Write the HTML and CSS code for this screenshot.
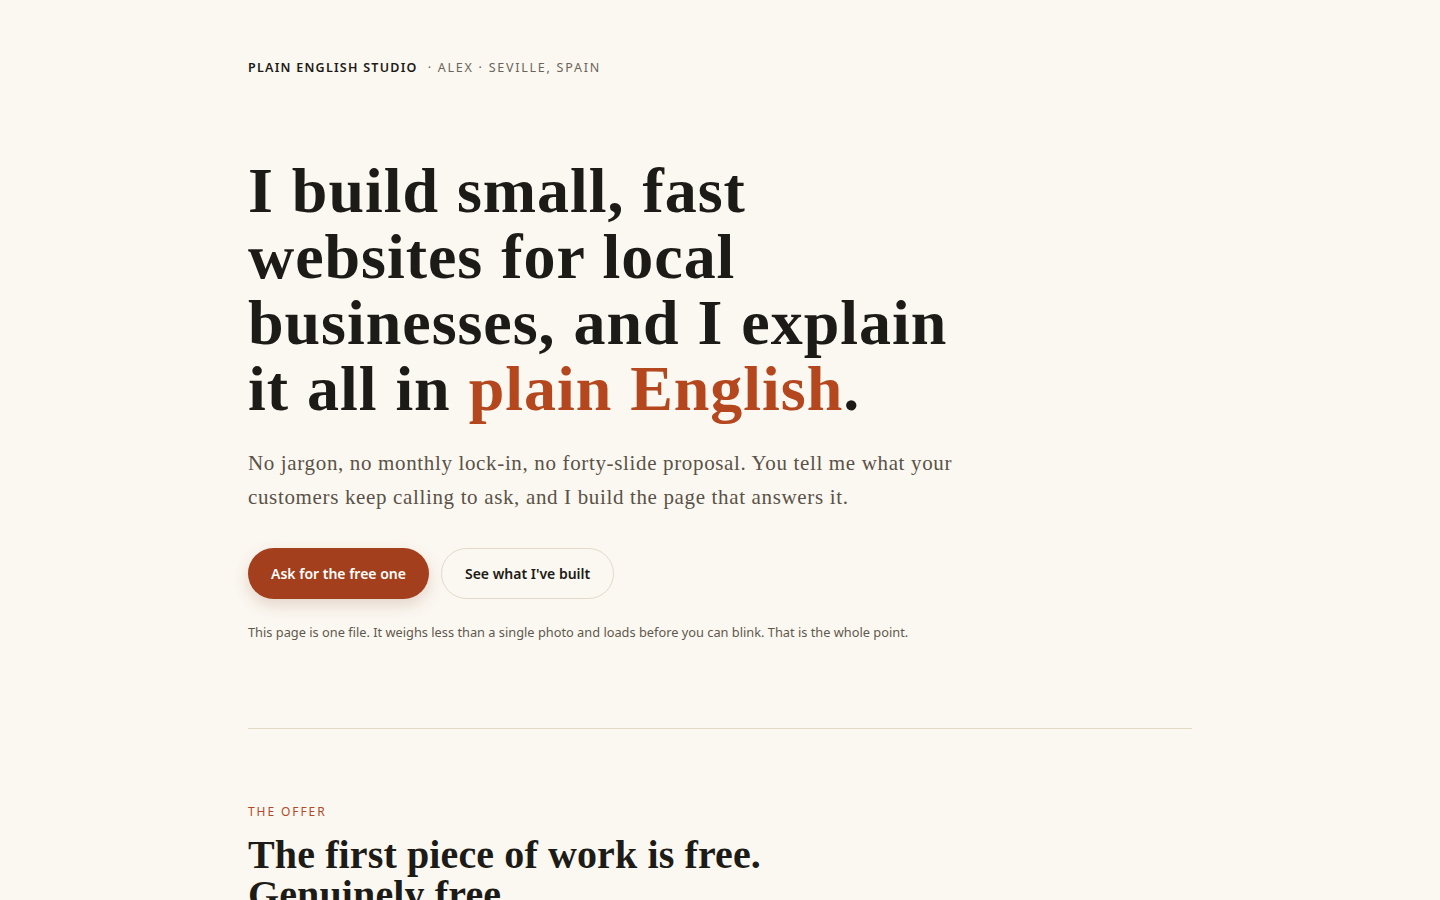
FILE: index.html
```html
<!DOCTYPE html>
<html lang="en">
<head>
<meta charset="utf-8">
<title>Plain English Studio</title>
<link rel="stylesheet" href="styles.css">
</head>
<body>
<main class="page">
  <header class="brand">
    <span class="brand-name">PLAIN ENGLISH STUDIO</span>
    <span class="brand-meta">· ALEX · SEVILLE, SPAIN</span>
  </header>

  <section class="hero">
    <h1 class="hero-title">I build small, fast websites for local businesses, and I explain it all in <span class="accent">plain English</span>.</h1>
    <p class="hero-lede">No jargon, no monthly lock-in, no forty-slide proposal. You tell me what your customers keep calling to ask, and I build the page that answers it.</p>
    <div class="actions">
      <a class="btn btn-primary" href="#offer">Ask for the free one</a>
      <a class="btn btn-ghost" href="#work">See what I've built</a>
    </div>
    <p class="note">This page is one file. It weighs less than a single photo and loads before you can blink. That is the whole point.</p>
  </section>

  <hr class="rule">

  <section class="offer" id="offer">
    <p class="eyebrow">THE OFFER</p>
    <h2 class="offer-title">The first piece of work is free.<br>Genuinely free.</h2>
  </section>
</main>
</body>
</html>
```

FILE: styles.css
```css
* { box-sizing: border-box; }
html, body { margin: 0; padding: 0; }
body {
  background: #fbf8f1;
  color: #1d1b17;
  font-family: "Noto Sans", "Open Sans", sans-serif;
  overflow: hidden;
  height: 900px;
}
.page {
  max-width: 944px;
  margin: 0 auto;
  padding-top: 59px;
}
.brand {
  display: flex;
  align-items: baseline;
  gap: 10px;
  font-size: 12.5px;
  line-height: 18px;
}
.brand-name { font-weight: 600; color: #1d1b17; letter-spacing: 0.1em; }
.brand-meta { color: #6b645a; letter-spacing: 0.14em; }

.hero { padding-top: 81px; }
.hero-title {
  margin: 0;
  max-width: 724px;
  font-family: "Liberation Serif", "Times New Roman", serif;
  font-weight: 700;
  font-size: 64px;
  line-height: 66px;
  letter-spacing: 0.015em;
  word-spacing: 1px;
  color: #1d1b17;
}
.accent { color: #b5471f; }
.hero-lede {
  margin: 24px 0 0;
  max-width: 720px;
  font-family: "Liberation Serif", "Times New Roman", serif;
  font-size: 21px;
  line-height: 34px;
  letter-spacing: 0.65px;
  color: #5a5248;
}
.actions {
  display: flex;
  gap: 12px;
  margin-top: 34px;
}
.btn {
  display: inline-flex;
  align-items: center;
  height: 51px;
  padding: 0 23px;
  border-radius: 999px;
  font-size: 14px;
  font-weight: 600;
  text-decoration: none;
}
.btn-primary {
  background: #a33f1c;
  color: #fff;
  box-shadow: 0 6px 16px rgba(120, 50, 20, 0.18);
}
.btn-ghost {
  background: transparent;
  color: #1d1b17;
  border: 1px solid #e3d9c9;
}
.note {
  margin: 24px 0 0;
  font-size: 12.8px;
  line-height: 18px;
  color: #5f584e;
}
.rule {
  border: 0;
  border-top: 1px solid #e4d8c6;
  margin: 87px 0 0;
}
.offer { padding-top: 75px; }
.eyebrow {
  margin: 0;
  font-size: 12px;
  letter-spacing: 0.16em;
  color: #b04a2a;
  line-height: 16px;
}
.offer-title {
  margin: 15px 0 0;
  font-family: "Liberation Serif", "Times New Roman", serif;
  font-weight: 700;
  font-size: 40px;
  line-height: 40px;
  letter-spacing: 0.003em;
  color: #1d1b17;
}
```
